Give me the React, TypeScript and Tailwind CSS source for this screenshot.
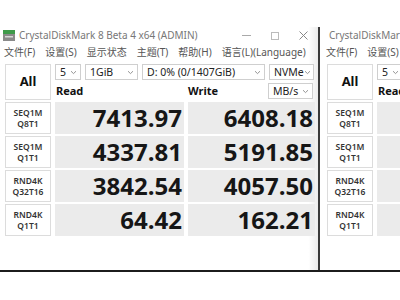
import React from 'react'

const ui = { fontFamily: '"Noto Sans", "Noto Sans CJK SC", sans-serif' }
const num = { fontFamily: '"Open Sans", "Noto Sans", sans-serif' }

function AppIcon() {
  return (
    <svg width="12" height="11" viewBox="0 0 12 11">
      <rect x="0" y="0" width="12" height="4" fill="#3f9a4a" />
      <rect x="0" y="4" width="12" height="7" fill="#8a8a8a" />
      <rect x="2" y="6" width="8" height="1.5" fill="#d8d8d8" />
    </svg>
  )
}

function Combo({ label, w }: { label: string; w: string }) {
  return (
    <div className={`${w} h-[16px] flex items-center justify-between border border-[#cfcfcf] bg-white pl-[4px] pr-[3px] text-[10.5px] text-[#222] leading-none`}>
      <span className="whitespace-nowrap">{label}</span>
      <svg width="7" height="5" viewBox="0 0 7 5" className="shrink-0">
        <path d="M1 1.2 L3.5 3.6 L6 1.2" fill="none" stroke="#888" strokeWidth="0.9" />
      </svg>
    </div>
  )
}

const rows = [
  { a: 'SEQ1M', b: 'Q8T1', r: '7413.97', w: '6408.18' },
  { a: 'SEQ1M', b: 'Q1T1', r: '4337.81', w: '5191.85' },
  { a: 'RND4K', b: 'Q32T16', r: '3842.54', w: '4057.50' },
  { a: 'RND4K', b: 'Q1T1', r: '64.42', w: '162.21' },
]

const menus = ['文件(F)', '设置(S)', '显示状态', '主题(T)', '帮助(H)', '语言(L)(Language)']

function TestButton({ a, b }: { a: string; b: string }) {
  return (
    <div className="w-[46px] h-[32px] shrink-0 border border-[#dcdcdc] bg-white flex flex-col items-center justify-center text-[8.5px] font-semibold text-[#333] leading-[11px]">
      <span>{a}</span>
      <span>{b}</span>
    </div>
  )
}

function Window({ full }: { full: boolean }) {
  return (
    <div className="flex flex-col h-full" style={ui}>
      {/* title bar */}
      <div className="h-[17px] flex items-center pl-[3px] pr-[10px]">
        <AppIcon />
        <span className="ml-[4px] text-[10px] text-[#777] whitespace-nowrap">CrystalDiskMark 8 Beta 4 x64 (ADMIN)</span>
        {full && (
          <div className="ml-auto flex items-center gap-[20px]">
            <div className="w-[9px] h-px bg-[#aaa]" />
            <div className="w-[8px] h-[8px] border border-[#bbb]" />
            <svg width="9" height="9" viewBox="0 0 9 9">
              <path d="M0.5 0.5 L8.5 8.5 M8.5 0.5 L0.5 8.5" stroke="#888" strokeWidth="1" />
            </svg>
          </div>
        )}
      </div>
      {/* menu */}
      <div className="h-[17px] flex items-center pl-[4px] gap-[10px] text-[10px] text-[#555] whitespace-nowrap">
        {menus.map((m) => (
          <span key={m}>{m}</span>
        ))}
      </div>
      {/* content */}
      <div className="pl-[5px] pt-[3px] flex flex-col gap-[2px]">
        <div className="flex gap-[4px]">
          <div className="w-[46px] h-[36px] shrink-0 border border-[#dcdcdc] bg-white flex items-center justify-center text-[13px] font-bold text-[#111]">
            All
          </div>
          <div className="flex flex-col gap-[3px]">
            <div className="flex gap-[4px]">
              <Combo label="5" w="w-[26px]" />
              <Combo label="1GiB" w="w-[53px]" />
              <Combo label="D: 0% (0/1407GiB)" w="w-[123px]" />
              <Combo label="NVMe" w="w-[45px]" />
            </div>
            <div className="flex gap-[3px] h-[16px] items-center">
              <div className="w-[129px] pl-[1px] text-[11px] font-bold text-[#111]">Read</div>
              <div className="w-[78px] pl-[1px] text-[11px] font-bold text-[#111]">Write</div>
              <Combo label="MB/s" w="w-[45px]" />
            </div>
          </div>
        </div>
        {rows.map((r) => (
          <div key={r.a + r.b} className="flex gap-[4px]">
            <TestButton a={r.a} b={r.b} />
            <div className="w-[129px] h-[32px] shrink-0 bg-[#ebebeb] flex items-center justify-end pr-[2px] text-[24px] font-bold text-[#161616]" style={num}>
              {r.r}
            </div>
            <div className="w-[127px] h-[32px] shrink-0 bg-[#ebebeb] flex items-center justify-end pr-[2px] text-[24px] font-bold text-[#161616]" style={num}>
              {r.w}
            </div>
          </div>
        ))}
      </div>
    </div>
  )
}

export default function App() {
  return (
    <div className="w-[400px] h-[300px] bg-white overflow-hidden flex flex-col">
      <div className="h-[27px] shrink-0" />
      <div className="h-[243px] shrink-0 flex">
        <div className="w-[318px] shrink-0 overflow-hidden bg-gradient-to-r from-white from-[97%] to-[#ececec]">
          <Window full />
        </div>
        <div className="w-[2px] shrink-0 bg-[#3a3a3a]" />
        <div className="flex-1 overflow-hidden pl-[2px] bg-white">
          <Window full={false} />
        </div>
      </div>
      <div className="h-[2px] shrink-0 bg-[#1c1c1c]" />
      <div className="flex-1 bg-white" />
    </div>
  )
}
